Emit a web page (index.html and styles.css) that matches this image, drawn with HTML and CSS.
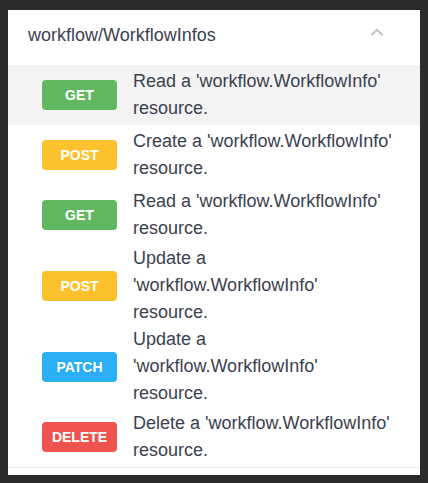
FILE: index.html
```html
<!DOCTYPE html>
<html lang='en'>
<head>
  <title>workflow/WorkflowInfos</title>

  <link rel="stylesheet" href="styles.css">
</head>
<body>
  <div class='panel'>
    <!-- Resource header -->
    <div class='panelHeader'>
      <span class='resourceName'>workflow/WorkflowInfos</span>
      <svg class='chevron' width='14' height='8' viewBox='0 0 14 8'>
        <path d='M1.5 7 L7 1.8 L12.5 7' fill='none' stroke='#c4c4c4' stroke-width='2'/>
      </svg>
    </div>

    <!-- Operations -->
    <div class='opList'>
      <div class='op active'>
        <span class='method get'>GET</span>
        <span class='summary'>Read a 'workflow.WorkflowInfo' resource.</span>
      </div>
      <div class='op'>
        <span class='method post'>POST</span>
        <span class='summary'>Create a 'workflow.WorkflowInfo' resource.</span>
      </div>
      <div class='op'>
        <span class='method get'>GET</span>
        <span class='summary'>Read a 'workflow.WorkflowInfo' resource.</span>
      </div>
      <div class='op'>
        <span class='method post'>POST</span>
        <span class='summary'>Update a 'workflow.WorkflowInfo' resource.</span>
      </div>
      <div class='op'>
        <span class='method patch'>PATCH</span>
        <span class='summary'>Update a 'workflow.WorkflowInfo' resource.</span>
      </div>
      <div class='op'>
        <span class='method delete'>DELETE</span>
        <span class='summary'>Delete a 'workflow.WorkflowInfo' resource.</span>
      </div>
    </div>

    <div class='panelFooter'></div>
  </div>
</body>
</html>
```

FILE: styles.css
```css
body {
  background-color: #2b2b2b;
  margin: 10px 8px;
  font-family: 'Liberation Sans', Arial, sans-serif;
  font-size: 18px;
  color: #3b4151;
}

.panel {
  background-color: white;
  height: 465px;
}

.panelHeader {
  display: flex;
  align-items: center;
  justify-content: space-between;
  padding: 12px 36px 16px 20px;
  line-height: 27px;
}

.chevron {
  margin-bottom: 8px;
}

.op {
  display: flex;
  align-items: center;
  min-height: 60px;
  padding: 0 25px 0 34px;
  line-height: 27px;
}

.op.active {
  background-color: #f3f3f3;
}

.method {
  flex: none;
  width: 75px;
  height: 30px;
  line-height: 30px;
  margin-right: 16px;
  border-radius: 4px;
  text-align: center;
  color: white;
  font-size: 14px;
  font-weight: bold;
}

.get {
  background-color: #61b861;
}

.post {
  background-color: #fcc22e;
}

.patch {
  background-color: #2aaef5;
}

.delete {
  background-color: #ef5350;
}

.panelFooter {
  border-top: 1px solid #ececec;
}
```
